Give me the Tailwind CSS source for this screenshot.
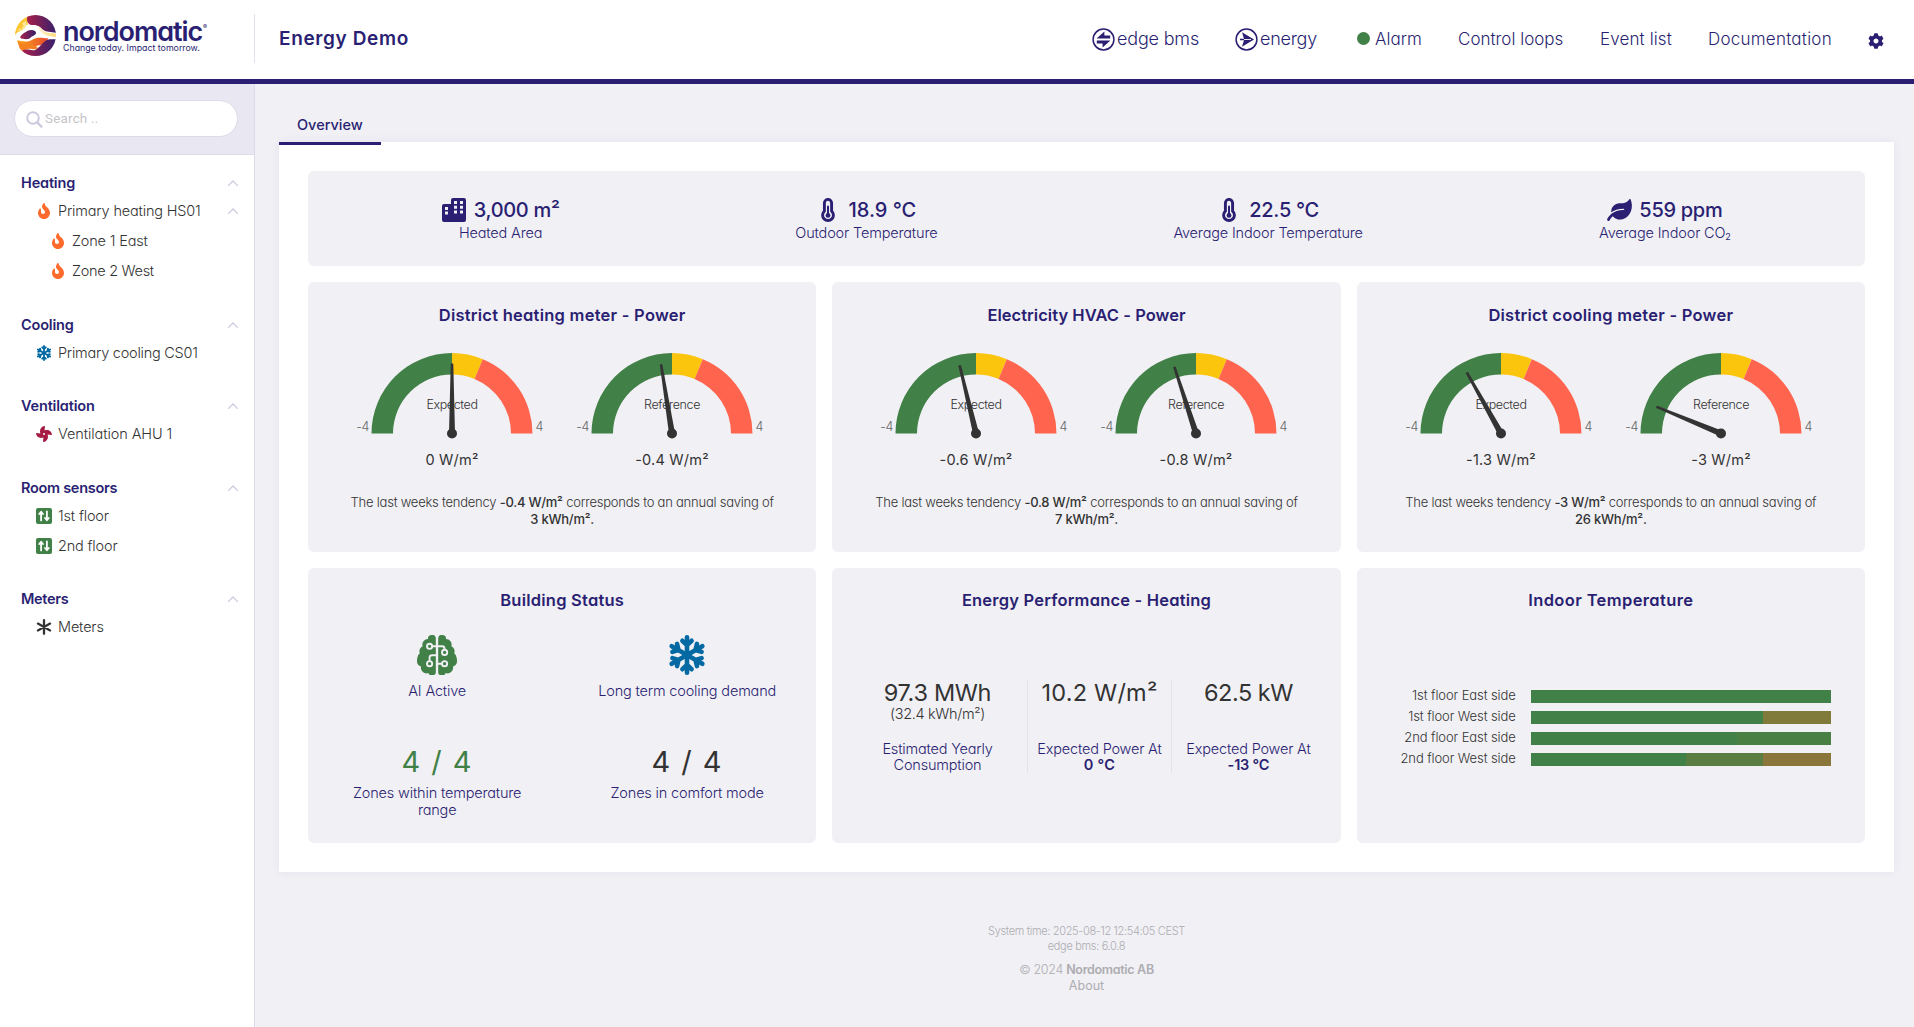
<!DOCTYPE html>
<html lang="en">
<head>
    <meta charset="UTF-8">
    <meta name="viewport" content="width=device-width, initial-scale=1.0">
    <title>Energy Demo - Overview</title>
    <script src="https://cdn.jsdelivr.net/npm/@tailwindcss/browser@4"></script>
    <style>
        body { font-family: 'Inter', 'Liberation Sans', sans-serif; font-feature-settings: 'cv11'; }
    </style>
</head>
<body class="h-screen overflow-hidden bg-[#f1f0f5] text-[#333] text-[14.5px] font-light flex flex-col">

    <!-- Icon sprite -->
    <svg class="hidden">
        <symbol id="i-fire" viewBox="0 0 384 512"><path fill="currentColor" d="M216 23.86c0-23.8-30.65-32.77-44.15-13.04C48 191.85 224 200 224 288c0 35.63-29.11 64.46-64.85 63.99-35.17-.45-63.15-29.77-63.15-64.94v-85.51c0-21.7-26.47-32.23-41.43-16.5C27.8 213.16 0 261.33 0 320c0 105.87 86.13 192 192 192s192-86.13 192-192c0-170.29-168-193-168-296.14z"/></symbol>
        <symbol id="i-snow" viewBox="0 0 40 40">
            <g id="snow-arm" fill="none" stroke="currentColor" stroke-width="4.6" stroke-linecap="round" stroke-linejoin="round">
                <path d="M20 20V2.3M15.4 5.8L20 10.2L24.6 5.8"/>
            </g>
            <use href="#snow-arm" transform="rotate(60 20 20)"/>
            <use href="#snow-arm" transform="rotate(120 20 20)"/>
            <use href="#snow-arm" transform="rotate(180 20 20)"/>
            <use href="#snow-arm" transform="rotate(240 20 20)"/>
            <use href="#snow-arm" transform="rotate(300 20 20)"/>
        </symbol>
        <symbol id="i-fan" viewBox="0 0 512 512"><path fill="currentColor" d="M352.57 128c-28.09 0-54.09 4.52-77.06 12.86l12.41-123.11C289 7.31 279.81-1.18 269.33.13 189.63 10.13 128 77.64 128 159.43c0 28.09 4.52 54.09 12.86 77.06L17.75 224.08C7.31 223-1.18 232.19.13 242.67c10 79.7 77.51 141.33 159.3 141.33 28.09 0 54.09-4.52 77.06-12.86l-12.41 123.11c-1.05 10.43 8.11 18.93 18.59 17.62 79.7-10 141.33-77.51 141.33-159.3 0-28.09-4.52-54.09-12.86-77.06l123.11 12.41c10.44 1.05 18.93-8.11 17.62-18.59-10-79.7-77.51-141.33-159.3-141.33zM256 288a32 32 0 1 1 32-32 32 32 0 0 1-32 32z"/></symbol>
        <symbol id="i-sensor" viewBox="0 0 16 16">
            <rect width="16" height="16" rx="2" fill="#418046"/>
            <path d="M5.1 12.4V4M3.2 6L5.1 3.7L7 6M10.9 3.4V12M9 10L10.9 12.3L12.8 10" fill="none" stroke="#fff" stroke-width="1.8" stroke-linecap="round" stroke-linejoin="round"/>
        </symbol>
        <symbol id="i-asterisk" viewBox="0 0 16 16"><path d="M8 1.2V14.8M1.9 4.6L14.1 11.4M14.1 4.6L1.9 11.4" stroke="currentColor" stroke-width="2.3" stroke-linecap="round"/></symbol>
        <symbol id="i-up" viewBox="0 0 10 6"><path d="M.6 5.4L5 1L9.4 5.4" fill="none" stroke="#cdc9df" stroke-width="1.3" stroke-linecap="round"/></symbol>
        <symbol id="i-thermo" viewBox="0 0 24 24">
            <path d="M8.4 5a3.6 3.6 0 0 1 7.2 0v8.1a5.4 5.4 0 1 1-7.2 0z" fill="none" stroke="currentColor" stroke-width="2.9"/>
            <path d="M12 8.5V17" stroke="currentColor" stroke-width="2" stroke-linecap="round"/>
            <circle cx="12" cy="17.4" r="2.4" fill="currentColor"/>
        </symbol>
        <symbol id="i-building" viewBox="0 0 24 24">
            <path fill="currentColor" d="M2 6h7V2a2 2 0 0 1 2-2h11a2 2 0 0 1 2 2v20a2 2 0 0 1-2 2H2a2 2 0 0 1-2-2V8a2 2 0 0 1 2-2z"/>
            <path fill="#f1f0f5" d="M3 9h3v3H3zM3 13.5h3v3H3zM12 3h3v3h-3zM18 3h3v3h-3zM12 7.8h3v3h-3zM18 7.8h3v3h-3zM12 12.5h3v3h-3zM18 12.5h3v3h-3z"/>
        </symbol>
        <symbol id="i-leaf" viewBox="0 0 576 512"><path fill="currentColor" d="M546.2 9.7c-5.6-12.5-21.6-13-28.3-1.2C486.9 62.4 431.4 96 368 96h-80C182 96 96 182 96 288c0 7 .8 13.7 1.5 20.5C161.3 262.8 253.4 224 384 224c8.8 0 16 7.2 16 16s-7.2 16-16 16C132.6 256 26 410.1 2.4 468c-6.6 16.3 1.2 34.9 17.5 41.6 16.4 6.8 35-1.1 41.8-17.3 1.5-3.6 20.9-47.9 71.9-90.6 32.4 43.9 94 85.8 174.9 77.2C465.5 467.5 576 326.7 576 154.3c0-50.2-10.8-102.2-29.8-144.6z"/></symbol>
        <symbol id="i-brain" viewBox="0 0 40 40">
            <g fill="currentColor">
                <path d="M18.8 3.5V36.5A3.8 3.6 0 0 1 11.4 38A5.6 5.6 0 0 1 4 31.6A6.6 6.6 0 0 1 .2 24A6.5 6.5 0 0 1 2.8 18.2A5.4 5.4 0 0 1 5.6 11.2A5.6 5.6 0 0 1 11 4A3.9 3.8 0 0 1 18.8 3.5z"/>
                <path d="M21.2 3.5V36.5A3.8 3.6 0 0 0 28.6 38A5.6 5.6 0 0 0 36 31.6A6.6 6.6 0 0 0 39.8 24A6.5 6.5 0 0 0 37.2 18.2A5.4 5.4 0 0 0 34.4 11.2A5.6 5.6 0 0 0 29 4A3.9 3.8 0 0 0 21.2 3.5z"/>
            </g>
            <g fill="none" stroke="#f1f0f5" stroke-width="1.9">
                <circle cx="12.6" cy="11.3" r="2.6"/><circle cx="27.6" cy="17.4" r="2.6"/>
                <circle cx="12.6" cy="28.7" r="2.6"/><circle cx="27.6" cy="28.7" r="2.6"/>
                <path d="M15.2 11.3H25.6Q27.6 11.3 27.6 14.8M19 20.2H15.2Q12.6 20.2 12.6 22.6V26M21 28.7H25"/>
            </g>
        </symbol>
        <symbol id="i-cog" viewBox="0 0 512 512"><path fill="currentColor" d="M487.4 315.7l-42.6-24.6c4.3-23.2 4.3-47 0-70.2l42.6-24.6c4.9-2.8 7.1-8.6 5.5-14-11.1-35.6-30-67.8-54.7-94.6-3.8-4.1-10-5.1-14.8-2.3L380.8 110c-17.9-15.4-38.5-27.3-60.8-35.1V25.8c0-5.6-3.9-10.5-9.4-11.7-36.7-8.2-74.3-7.8-109.2 0-5.5 1.2-9.4 6.1-9.4 11.7V75c-22.2 7.9-42.8 19.8-60.8 35.1L88.7 85.5c-4.9-2.8-11-1.9-14.8 2.3-24.7 26.7-43.6 58.9-54.7 94.6-1.7 5.4.6 11.2 5.5 14L67.3 221c-4.3 23.2-4.3 47 0 70.2l-42.6 24.6c-4.9 2.8-7.1 8.6-5.5 14 11.1 35.6 30 67.8 54.7 94.6 3.8 4.1 10 5.1 14.8 2.3l42.6-24.6c17.9 15.4 38.5 27.3 60.8 35.1v49.2c0 5.6 3.9 10.5 9.4 11.7 36.7 8.2 74.3 7.8 109.2 0 5.5-1.2 9.4-6.1 9.4-11.7v-49.2c22.2-7.9 42.8-19.8 60.8-35.1l42.6 24.6c4.9 2.8 11 1.9 14.8-2.3 24.7-26.7 43.6-58.9 54.7-94.6 1.5-5.5-.7-11.3-5.6-14.1zM256 336c-44.1 0-80-35.9-80-80s35.9-80 80-80 80 35.9 80 80-35.9 80-80 80z"/></symbol>
    </svg>

    <!-- Top bar -->
    <header class="h-[84px] shrink-0 bg-white border-b-[5px] border-[#2a1f72] text-[#2a1f72] flex items-start">
        <div class="w-[254px] shrink-0 pt-[15px] pl-[15px] flex gap-[7px]">
            <svg class="w-[41px] h-[41px] shrink-0" viewBox="0 0 123 123">
                <defs>
                    <clipPath id="disc"><circle cx="61.5" cy="61.5" r="61.5"/></clipPath>
                    <linearGradient id="plum"><stop offset="0" stop-color="#a81f4b"/><stop offset="1" stop-color="#35206b"/></linearGradient>
                    <linearGradient id="amber"><stop offset="0" stop-color="#f9a51b"/><stop offset="1" stop-color="#e8482d"/></linearGradient>
                    <linearGradient id="straw"><stop offset="0" stop-color="#fff3d0"/><stop offset="1" stop-color="#ffd978"/></linearGradient>
                </defs>
                <g clip-path="url(#disc)">
                    <path fill="#fbc62f" d="M0 62C5 50 14 50 22 45C34 38 28 30 38 30V0H0z"/>
                    <path fill="#fde69b" d="M8 48l6-8l5 3l7-12l-6-4l12-10l3 12l-10 14z"/>
                    <path fill="url(#plum)" d="M40 -2C32 12 36 28 50 30C68 28 76 36 84 44C94 52 110 50 125 54V-2z"/>
                    <path fill="url(#straw)" d="M66 32C78 36 80 46 92 51C102 55 114 54 125 56V66C104 64 92 62 82 54C74 48 72 38 66 32z"/>
                    <path fill="url(#plum)" d="M38 47C48 42 64 46 63 54C62 62 52 62 48 67C42 76 22 72 16 69C14 60 30 52 38 47z"/>
                    <path fill="url(#amber)" d="M6 76C22 80 40 82 52 74C64 66 78 68 100 70C92 86 84 90 66 92C48 96 30 98 16 104z"/>
                    <path fill="#f58220" d="M8 80C24 90 44 84 60 92C74 96 66 106 50 102C36 98 26 108 18 110z"/>
                    <path fill="url(#plum)" d="M20 108C38 98 50 110 62 104C82 92 84 76 104 73C112 72 118 74 125 72V125H20z"/>
                </g>
            </svg>
            <div class="flex flex-col pt-1">
                <div class="h-[25px] leading-[25px] text-[27px] font-semibold tracking-[-0.04em] whitespace-nowrap flex items-start">nordomatic<span class="ml-px text-[6px] leading-[16px] font-normal tracking-normal">®</span></div>
                <div class="leading-[8px] text-[8.8px] font-normal whitespace-nowrap">Change today. Impact tomorrow.</div>
            </div>
        </div>
        <div class="w-px h-[49px] mt-[14px] bg-[#e3e1ec]"></div>
        <h1 class="ml-[24px] mt-[27px] leading-6 text-[19px] font-semibold tracking-[0.033em]">Energy Demo</h1>

        <nav class="ml-auto mt-[28px] pr-[30px] h-6 flex items-center gap-9 text-[17px] whitespace-nowrap">
            <div class="flex items-center gap-[2px]">
                <svg class="w-[23px] h-[23px] -mt-px" viewBox="0 0 23 23">
                    <circle cx="11.5" cy="11.5" r="10.4" fill="none" stroke="#2a1f72" stroke-width="1.5"/>
                    <path fill="#2a1f72" d="M4.6 10.5L12.4 3.4V7.4H18.2V10.5zM18.4 12.5L10.6 19.6V15.6H4.8V12.5z"/>
                </svg>
                <span class="w-[82px] -mt-1 text-[18px] tracking-[-0.01em]">edge bms</span>
            </div>
            <div class="flex items-center gap-[2px] mr-1">
                <svg class="w-[23px] h-[23px] -mt-px" viewBox="0 0 23 23">
                    <circle cx="11.5" cy="11.5" r="10.4" fill="none" stroke="#2a1f72" stroke-width="1.5"/>
                    <path fill="#2a1f72" d="M7 4.2L19 11.5L7 18.8L9 12.2H5V10.8H9z"/>
                    <path stroke="#fff" stroke-width=".9" d="M9 11.5H16"/>
                </svg>
                <span class="w-[57px] -mt-1 text-[18px] tracking-[-0.014em]">energy</span>
            </div>
            <div class="flex items-center gap-[5px]">
                <span class="w-[13px] h-[13px] -mt-[3px] rounded-full bg-[#418046]"></span>
                <span class="w-[47px]">Alarm</span>
            </div>
            <span class="w-[106px]">Control loops</span>
            <span class="w-[72px] tracking-[0.007em]">Event list</span>
            <span class="w-[124px] tracking-[0.014em]">Documentation</span>
            <svg class="w-4 h-4 mt-px"><use href="#i-cog"/></svg>
        </nav>
    </header>

    <div class="flex flex-1 min-h-0">
        <!-- Sidebar -->
        <aside class="w-[255px] shrink-0 bg-white border-r border-[#dddaea]">
            <div class="h-[71px] bg-[#e9e7f2] border-b border-[#dddaea] pt-4 pl-[14px]">
                <div class="w-[224px] h-[37px] rounded-full bg-white border border-[#dddaea] flex items-center pl-[11px] pt-px gap-[2px]">
                    <svg class="w-[17px] h-[17px]" viewBox="0 0 17 17"><path d="M11 11.2L15.4 15.6" stroke="#cdc9df" stroke-width="2.4" stroke-linecap="round"/><circle cx="7" cy="7" r="5.8" fill="none" stroke="#cdc9df" stroke-width="2"/></svg>
                    <span class="font-['Roboto',sans-serif] font-normal text-[13.3px] tracking-[0.02em] text-[#c4c4c8]">Search ..</span>
                </div>
            </div>
            <nav class="pt-[15px] flex flex-col gap-[25.5px] tracking-[-0.012em]">
                <section>
                    <h2 class="h-[26px] pl-[21px] pr-4 flex items-center justify-between font-semibold text-[#2a1f72]">Heating<svg class="w-[10px] h-[6px]"><use href="#i-up"/></svg></h2>
                    <div class="h-[30px] pl-9 pr-4 flex items-center"><svg class="w-4 h-4 mr-[6px] text-[#ff6b2c]"><use href="#i-fire"/></svg>Primary heating HS01<svg class="w-[10px] h-[6px] ml-auto"><use href="#i-up"/></svg></div>
                    <div class="h-[30px] pl-[50px] flex items-center"><svg class="w-4 h-4 mr-[6px] text-[#ff6b2c]"><use href="#i-fire"/></svg>Zone 1 East</div>
                    <div class="h-[30px] pl-[50px] flex items-center tracking-[-0.02em]"><svg class="w-4 h-4 mr-[6px] text-[#ff6b2c]"><use href="#i-fire"/></svg>Zone 2 West</div>
                </section>
                <section>
                    <h2 class="h-[26px] pl-[21px] pr-4 flex items-center justify-between font-semibold text-[#2a1f72]">Cooling<svg class="w-[10px] h-[6px]"><use href="#i-up"/></svg></h2>
                    <div class="h-[30px] pl-9 flex items-center tracking-[-0.017em]"><svg class="w-4 h-4 mr-[6px] text-[#0269a3]"><use href="#i-snow"/></svg>Primary cooling CS01</div>
                </section>
                <section>
                    <h2 class="h-[26px] pl-[21px] pr-4 flex items-center justify-between font-semibold text-[#2a1f72]">Ventilation<svg class="w-[10px] h-[6px]"><use href="#i-up"/></svg></h2>
                    <div class="h-[30px] pl-9 flex items-center tracking-[-0.006em]"><svg class="w-4 h-4 mr-[6px] text-[#a61c43]"><use href="#i-fan"/></svg>Ventilation AHU 1</div>
                </section>
                <section>
                    <h2 class="h-[26px] pl-[21px] pr-4 flex items-center justify-between font-semibold tracking-[-0.02em] text-[#2a1f72]">Room sensors<svg class="w-[10px] h-[6px]"><use href="#i-up"/></svg></h2>
                    <div class="h-[30px] pl-9 flex items-center"><svg class="w-4 h-4 mr-[6px]"><use href="#i-sensor"/></svg>1st floor</div>
                    <div class="h-[30px] pl-9 flex items-center"><svg class="w-4 h-4 mr-[6px]"><use href="#i-sensor"/></svg>2nd floor</div>
                </section>
                <section>
                    <h2 class="h-[26px] pl-[21px] pr-4 flex items-center justify-between font-semibold tracking-[-0.02em] text-[#2a1f72]">Meters<svg class="w-[10px] h-[6px]"><use href="#i-up"/></svg></h2>
                    <div class="h-[30px] pl-9 flex items-center"><svg class="w-4 h-4 mr-[6px]"><use href="#i-asterisk"/></svg>Meters</div>
                </section>
            </nav>
        </aside>

        <!-- Content -->
        <main class="flex-1 pl-6 pr-5">
            <div class="h-[58px] flex items-end">
                <div class="relative z-10 w-[102px] h-[31px] pl-[18px] leading-[27px] font-medium text-[#2a1f72]">Overview
                    <span class="absolute left-0 -bottom-[3px] w-full h-[3px] bg-[#2a1f72]"></span>
                </div>
            </div>
            <div class="bg-white p-[29px] shadow-[0_0_10px_rgba(42,31,114,0.06)] flex flex-col gap-4">
                <!-- Key figures -->
                <div class="h-[95px] rounded-md bg-[#f1f0f5] text-[#2a1f72] px-4 pt-[27px] flex items-start justify-around text-center tracking-[-0.011em] whitespace-nowrap">
                    <div class="w-[118px]">
                        <div class="h-6 flex items-center justify-center gap-2 text-[20px] font-medium tracking-[-0.015em]"><svg class="w-6 h-6 shrink-0"><use href="#i-building"/></svg>3,000 m²</div>
                        <div class="leading-[22px]">Heated Area</div>
                    </div>
                    <div class="w-[143px]">
                        <div class="h-6 flex items-center justify-center gap-2 text-[20px] font-medium tracking-normal"><svg class="w-6 h-6 shrink-0"><use href="#i-thermo"/></svg>18.9 °C</div>
                        <div class="leading-[22px]">Outdoor Temperature</div>
                    </div>
                    <div class="w-[190px]">
                        <div class="h-6 flex items-center justify-center gap-2 text-[20px] font-medium tracking-[-0.015em]"><svg class="w-6 h-6 shrink-0"><use href="#i-thermo"/></svg>22.5 °C</div>
                        <div class="leading-[22px]">Average Indoor Temperature</div>
                    </div>
                    <div class="w-[133px]">
                        <div class="h-6 flex items-center justify-center gap-[7px] text-[20px] font-medium tracking-[-0.015em]"><svg class="w-[25px] h-[22px] shrink-0"><use href="#i-leaf"/></svg>559 ppm</div>
                        <div class="leading-[22px]">Average Indoor CO<sub class="text-[9px] font-normal">2</sub></div>
                    </div>
                </div>

                <!-- Power gauges, filled from the script below -->
                <div id="meters" class="grid grid-cols-3 gap-4"></div>

                <div class="grid grid-cols-3 gap-4">
                    <div class="h-[275px] rounded-md bg-[#f1f0f5] pt-[20px] text-center">
                        <h3 class="leading-6 text-[16.5px] font-semibold tracking-[0.014em] text-[#2a1f72]">Building Status</h3>
                        <div class="mt-[23px] w-[500px] mx-auto grid grid-cols-2 gap-y-[46px] leading-[17px] tracking-[-0.012em] text-[#2a1f72]">
                            <div>
                                <svg class="w-10 h-10 mx-auto text-[#418046]"><use href="#i-brain"/></svg>
                                <div class="mt-[7px]">AI Active</div>
                            </div>
                            <div>
                                <svg class="w-10 h-10 mx-auto text-[#0269a3]"><use href="#i-snow"/></svg>
                                <div class="mt-[7px]">Long term cooling demand</div>
                            </div>
                            <div>
                                <div class="leading-[34px] text-[29px] font-normal tracking-[0.05em] text-[#418046]">4 / 4</div>
                                <div class="mt-[5px] w-[190px] mx-auto">Zones within temperature range</div>
                            </div>
                            <div>
                                <div class="leading-[34px] text-[29px] font-normal tracking-[0.05em] text-[#333]">4 / 4</div>
                                <div class="mt-[5px]">Zones in comfort mode</div>
                            </div>
                        </div>
                    </div>

                    <div class="h-[275px] rounded-md bg-[#f1f0f5] pt-[20px] text-center">
                        <h3 class="leading-6 text-[16.5px] font-semibold tracking-[0.012em] text-[#2a1f72]">Energy Performance - Heating</h3>
                        <div class="mt-[68px] h-[93px] flex justify-center tracking-[-0.013em] leading-4 whitespace-nowrap">
                            <div class="w-[179px] flex flex-col">
                                <div class="leading-[25px] text-[23.5px] font-normal tracking-[-0.014em]">97.3 MWh</div>
                                <div class="leading-[17px] tracking-[-0.023em]">(32.4 kWh/m²)</div>
                                <div class="mt-auto text-[#2a1f72]">Estimated Yearly<br>Consumption</div>
                            </div>
                            <div class="w-36 flex flex-col border-l border-[#e3e3e8]">
                                <div class="leading-[25px] text-[23.5px] font-normal tracking-[0.009em]">10.2 W/m²</div>
                                <div class="mt-auto text-[#2a1f72]">Expected Power At<br><b class="font-semibold tracking-[0.02em]">0 °C</b></div>
                            </div>
                            <div class="w-[154px] flex flex-col border-l border-[#e3e3e8]">
                                <div class="leading-[25px] text-[23.5px] font-normal tracking-[-0.02em]">62.5 kW</div>
                                <div class="mt-auto text-[#2a1f72]">Expected Power At<br><b class="font-semibold">-13 °C</b></div>
                            </div>
                        </div>
                    </div>

                    <div class="h-[275px] rounded-md bg-[#f1f0f5] pt-[20px]">
                        <h3 class="text-center leading-6 text-[16.5px] font-semibold tracking-[0.023em] text-[#2a1f72]">Indoor Temperature</h3>
                        <div id="temps" class="mt-[78px] flex flex-col gap-2 text-[13px] tracking-[-0.008em]"></div>
                    </div>
                </div>
            </div>

            <footer class="mt-[52px] text-center text-[#adadb1]">
                <div class="text-[11px] leading-[15px] tracking-[-0.03em]">System time: 2025-08-12 12:54:05 CEST<br>edge bms: 6.0.8</div>
                <div class="mt-2 text-[12.5px] leading-4 tracking-[-0.025em]">© 2024 <b class="font-semibold">Nordomatic AB</b><br><span class="font-normal tracking-normal">About</span></div>
            </footer>
        </main>
    </div>

    <script>
        const meters = [
            { title: 'District heating meter - Power', expected: 0, reference: -0.4, saving: 3 },
            { title: 'Electricity HVAC - Power', narrow: true, expected: -0.6, reference: -0.8, saving: 7 },
            { title: 'District cooling meter - Power', expected: -1.3, reference: -3, saving: 26 }
        ];

        const temps = [
            { name: '1st floor East side', parts: [[100, '#418046']] },
            { name: '1st floor West side', parts: [[77.3, '#418046'], [22.7, '#807a3b']] },
            { name: '2nd floor East side', parts: [[68.7, '#418046'], [31.3, '#4a7f44']] },
            { name: '2nd floor West side', parts: [[51.7, '#418046'], [25.6, '#5a7e41'], [22.7, '#8a763a']] }
        ];

        // Ring segment between two angles, measured in degrees from straight up
        function arc(from, to, color) {
            const p = (r, deg) => {
                const a = deg * Math.PI / 180;
                return `${(110 + r * Math.sin(a)).toFixed(2)} ${(93.5 - r * Math.cos(a)).toFixed(2)}`;
            };
            return `<path fill="${color}" d="M${p(80.5, from)}A80.5 80.5 0 0 1 ${p(80.5, to)}L${p(59, to)}A59 59 0 0 0 ${p(59, from)}z"/>`;
        }

        function gauge(label, value) {
            return `
                <svg class="w-[220px] h-[140px]" viewBox="0 0 220 140" fill="#333">
                    ${arc(-90, 0, '#418046')}${arc(0, 22.5, '#fbc40d')}${arc(22.5, 90, '#ff644e')}
                    <text x="110" y="69" text-anchor="middle" class="text-[12.5px] tracking-[-0.03em]">${label}</text>
                    <text x="27" y="91" text-anchor="end" fill="#666" class="text-[12.5px] tracking-[-0.03em]">-4</text>
                    <text x="193.5" y="91" fill="#666" class="text-[12.5px]">4</text>
                    <g transform="rotate(${value / 4 * 90} 110 93.5)">
                        <path d="M107 93.5L108.7 24Q110 22.4 111.3 24L113 93.5z"/>
                    </g>
                    <circle cx="110" cy="93.5" r="5"/>
                    <text x="110" y="125" text-anchor="middle" class="text-[14.5px] font-normal tracking-[0.015em]">${value} W/m²</text>
                </svg>`;
        }

        document.getElementById('meters').innerHTML = meters.map(m => `
            <div class="h-[270px] rounded-md bg-[#f1f0f5] pt-[21px] text-center">
                <h3 class="leading-6 text-[16.5px] font-semibold text-[#2a1f72] ${m.narrow ? 'tracking-[0.002em]' : 'tracking-[0.015em]'}">${m.title}</h3>
                <div class="mt-[13px] flex justify-center">${gauge('Expected', m.expected)}${gauge('Reference', m.reference)}</div>
                <p class="mt-[14px] text-[13px] leading-[17px] tracking-[-0.018em]">The last weeks tendency <b class="font-medium">${m.reference} W/m²</b> corresponds to an annual saving of<br><b class="font-medium">${m.saving} kWh/m².</b></p>
            </div>
        `).join('');

        document.getElementById('temps').innerHTML = temps.map(t => `
            <div class="h-[13px] flex items-center gap-[15px]">
                <span class="w-[159px] -mt-[2px] text-right leading-[13px]">${t.name}</span>
                <div class="w-[300px] h-[13px] flex">${t.parts.map(([w, c]) => `<span class="h-full" style="width: ${w}%; background: ${c}"></span>`).join('')}</div>
            </div>
        `).join('');
    </script>
</body>
</html>
